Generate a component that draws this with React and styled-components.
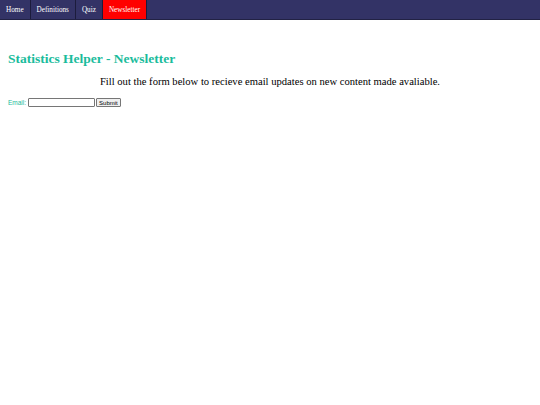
import React from 'react';
import styled, { createGlobalStyle } from 'styled-components';

const GlobalStyle = createGlobalStyle`
  html, body {
    margin: 0;
    padding: 0;
    background: #ffffff;
    font-family: "Liberation Serif", "Times New Roman", serif;
  }
`;

const NavBar = styled.ul`
  display: flex;
  margin: 0;
  padding: 0;
  list-style: none;
  height: 19px;
  background: #333366;
  border-bottom: 1px solid #222244;
`;

const NavItem = styled.li`
  display: flex;
  align-items: center;
  padding: 1px 6px 0;
  font-size: 7.2px;
  color: #ffffff;
  background: ${(p) => (p.active ? '#ff0000' : 'transparent')};
  border-right: 1px solid #1c1c3c;
`;

const Main = styled.div`
  padding: 0 8px;
`;

const Title = styled.h1`
  margin: 31px 0 0;
  font-size: 13.5px;
  font-weight: bold;
  color: #1abc9c;
`;

const Intro = styled.p`
  margin: 9px 0 0;
  text-align: center;
  font-size: 10.6px;
  color: #000000;
`;

const Form = styled.form`
  display: flex;
  align-items: center;
  margin-top: 11px;
`;

const Label = styled.label`
  font-family: "Liberation Sans", Arial, sans-serif;
  font-size: 6.5px;
  color: #1abc9c;
  margin-right: 2px;
`;

const Input = styled.input`
  box-sizing: border-box;
  width: 67px;
  height: 9px;
  padding: 0 1px;
  border: 1px solid #767676;
  border-radius: 1px;
  font-size: 7px;
`;

const SubmitButton = styled.button`
  box-sizing: border-box;
  margin-left: 1px;
  height: 9px;
  padding: 0 2px;
  font-family: "Liberation Sans", Arial, sans-serif;
  font-size: 6px;
  color: #000000;
  background: #efefef;
  border: 1px solid #767676;
  border-radius: 1px;
  line-height: 1;
`;

export default function App() {
  return (
    <>
      <GlobalStyle />
      <NavBar>
        <NavItem>Home</NavItem>
        <NavItem>Definitions</NavItem>
        <NavItem>Quiz</NavItem>
        <NavItem active>Newsletter</NavItem>
      </NavBar>
      <Main>
        <Title>Statistics Helper - Newsletter</Title>
        <Intro>Fill out the form below to recieve email updates on new content made avaliable.</Intro>
        <Form onSubmit={(e) => e.preventDefault()}>
          <Label htmlFor="email">Email:</Label>
          <Input id="email" type="text" />
          <SubmitButton type="submit">Submit</SubmitButton>
        </Form>
      </Main>
    </>
  );
}
